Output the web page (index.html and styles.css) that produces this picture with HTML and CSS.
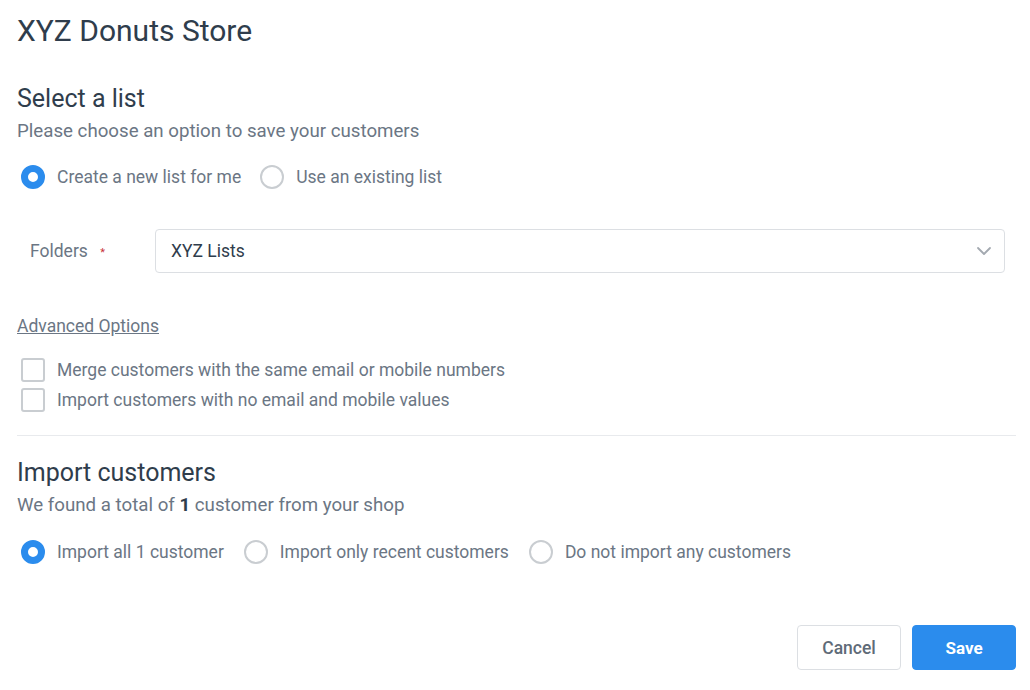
FILE: index.html
```html
<!DOCTYPE html>
<html lang="en">
<head>
  <meta charset="UTF-8">
  <title>XYZ Donuts Store</title>
  <link rel="stylesheet" href="styles.css">
</head>
<body>

<div class="page">
  <h1 class="store-title">XYZ Donuts Store</h1>

  <!-- Select a list -->
  <h2 class="section-title">Select a list</h2>
  <p class="section-sub">Please choose an option to save your customers</p>

  <div class="radio-row">
    <label class="radio"><span class="dot checked"></span>Create a new list for me</label>
    <label class="radio"><span class="dot"></span>Use an existing list</label>
  </div>

  <div class="field-row">
    <div class="field-label">Folders <span class="req">*</span></div>
    <div class="select">
      <span>XYZ Lists</span>
      <svg class="chevron" width="16" height="10" viewBox="0 0 16 10">
        <path d="M2 2 L8 8 L14 2" fill="none" stroke="#a3a9b0" stroke-width="1.8" stroke-linecap="round" stroke-linejoin="round"/>
      </svg>
    </div>
  </div>

  <a class="adv-link" href="#">Advanced Options</a>

  <div class="checks">
    <label class="check"><span class="box"></span>Merge customers with the same email or mobile numbers</label>
    <label class="check"><span class="box"></span>Import customers with no email and mobile values</label>
  </div>

  <hr class="divider">

  <!-- Import customers -->
  <h2 class="section-title import">Import customers</h2>
  <p class="section-sub">We found a total of <b>1</b> customer from your shop</p>

  <div class="radio-row import-row">
    <label class="radio"><span class="dot checked"></span>Import all 1 customer</label>
    <label class="radio"><span class="dot"></span>Import only recent customers</label>
    <label class="radio"><span class="dot"></span>Do not import any customers</label>
  </div>

  <div class="actions">
    <button class="btn btn-cancel">Cancel</button>
    <button class="btn btn-save">Save</button>
  </div>
</div>

</body>
</html>
```

FILE: styles.css
```css
html, body {
  margin: 0;
  padding: 0;
  background: #fff;
  font-family: Roboto, "Liberation Sans", Arial, sans-serif;
}

.page {
  padding: 13px 14px 0 17px;
}

.store-title {
  margin: 0;
  font-size: 30px;
  line-height: 36px;
  font-weight: 400;
  color: #2f3d4c;
}

.section-title {
  margin: 35px 0 0;
  font-size: 25px;
  line-height: 30px;
  font-weight: 400;
  color: #2f3d4c;
}

.section-title.import {
  margin-top: 22px;
}

.section-sub {
  margin: 5px 0 0;
  font-size: 18.7px;
  line-height: 24px;
  color: #6b7684;
}

.section-sub b {
  color: #2f3d4c;
}

.radio-row {
  display: flex;
  gap: 19px;
  margin-top: 20px;
  padding-left: 4px;
}

.import-row {
  margin-top: 21px;
  gap: 20px;
}

.radio, .check {
  display: flex;
  align-items: center;
  gap: 12px;
  font-size: 17.5px;
  color: #6b7684;
  height: 28px;
}

.dot {
  box-sizing: border-box;
  width: 24px;
  height: 24px;
  border-radius: 50%;
  border: 2px solid #c9cdd1;
  background: #fff;
}

.dot.checked {
  border: 7px solid #2b8ced;
}

.field-row {
  display: flex;
  align-items: center;
  margin-top: 38px;
  margin-right: 11px;
}

.field-label {
  width: 125px;
  padding-left: 13px;
  font-size: 17.5px;
  color: #6b7684;
}

.req {
  color: #c8323a;
  font-size: 11px;
  margin-left: 8px;
  vertical-align: middle;
}

.select {
  flex: 1;
  box-sizing: border-box;
  height: 44px;
  display: flex;
  align-items: center;
  justify-content: space-between;
  padding: 0 12px 0 15px;
  border: 1px solid #dcdfe3;
  border-radius: 4px;
  font-size: 17.5px;
  color: #2f3d4c;
}

.adv-link {
  display: inline-block;
  margin-top: 42px;
  font-size: 17.5px;
  line-height: 22px;
  color: #6b7684;
  text-decoration: underline;
}

.checks {
  margin-top: 18px;
  padding-left: 4px;
}

.check {
  height: 30px;
}

.box {
  box-sizing: border-box;
  width: 24px;
  height: 24px;
  border: 2px solid #c9cdd1;
  border-radius: 3px;
}

.divider {
  margin: 20px 0 0;
  border: 0;
  border-top: 1px solid #e8eaed;
}

.actions {
  display: flex;
  justify-content: flex-end;
  gap: 11px;
  margin-top: 59px;
}

.btn {
  width: 104px;
  height: 45px;
  border-radius: 4px;
  font-family: Roboto, "Liberation Sans", Arial, sans-serif;
  font-size: 17.5px;
  font-weight: 500;
}

.btn-cancel {
  background: #fff;
  border: 1px solid #dcdfe3;
  color: #5f6b78;
}

.btn-save {
  background: #2b8ced;
  border: 1px solid #2b8ced;
  color: #fff;
  font-size: 17px;
  font-weight: 700;
}
```
